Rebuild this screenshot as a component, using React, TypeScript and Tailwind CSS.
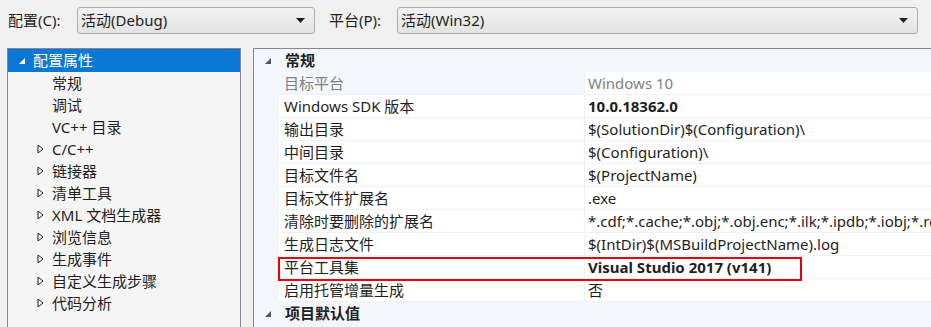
import * as React from 'react';

const FONT = '"Noto Sans", "Noto Sans CJK SC", sans-serif';

type TreeItem = { label: string; depth: 0 | 1; state: 'open' | 'closed' | 'leaf'; selected?: boolean };

const TREE: TreeItem[] = [
  { label: '配置属性', depth: 0, state: 'open', selected: true },
  { label: '常规', depth: 1, state: 'leaf' },
  { label: '调试', depth: 1, state: 'leaf' },
  { label: 'VC++ 目录', depth: 1, state: 'leaf' },
  { label: 'C/C++', depth: 1, state: 'closed' },
  { label: '链接器', depth: 1, state: 'closed' },
  { label: '清单工具', depth: 1, state: 'closed' },
  { label: 'XML 文档生成器', depth: 1, state: 'closed' },
  { label: '浏览信息', depth: 1, state: 'closed' },
  { label: '生成事件', depth: 1, state: 'closed' },
  { label: '自定义生成步骤', depth: 1, state: 'closed' },
  { label: '代码分析', depth: 1, state: 'closed' },
];

type Prop = { name: string; value: string; bold?: boolean; readOnly?: boolean; marked?: boolean };

const PROPS: Prop[] = [
  { name: '目标平台', value: 'Windows 10', readOnly: true },
  { name: 'Windows SDK 版本', value: '10.0.18362.0', bold: true },
  { name: '输出目录', value: '$(SolutionDir)$(Configuration)\\' },
  { name: '中间目录', value: '$(Configuration)\\' },
  { name: '目标文件名', value: '$(ProjectName)' },
  { name: '目标文件扩展名', value: '.exe' },
  { name: '清除时要删除的扩展名', value: '*.cdf;*.cache;*.obj;*.obj.enc;*.ilk;*.ipdb;*.iobj;*.resources;*.tlb;*.tli;*.tlh;*.tmp' },
  { name: '生成日志文件', value: '$(IntDir)$(MSBuildProjectName).log' },
  { name: '平台工具集', value: 'Visual Studio 2017 (v141)', bold: true, marked: true },
  { name: '启用托管增量生成', value: '否' },
];

function OpenArrow({ color }: { color: string }) {
  return (
    <svg width="8" height="8" viewBox="0 0 8 8" className="shrink-0">
      <path d="M7 1 L7 7 L1 7 Z" fill={color} />
    </svg>
  );
}

function ClosedArrow() {
  return (
    <svg width="7" height="10" viewBox="0 0 7 10" className="shrink-0">
      <path d="M1 1 L6 5 L1 9 Z" fill="none" stroke="#1e1e1e" strokeWidth="1" />
    </svg>
  );
}

function Combo({ text, className }: { text: string; className: string }) {
  return (
    <div
      className={`flex h-[27px] shrink-0 items-center justify-between rounded-[3px] border border-[#acacac] bg-gradient-to-b from-[#f2f2f2] to-[#e3e3e3] pl-[3px] pr-[9px] ${className}`}
    >
      <span className="text-[15px] leading-none text-[#1e1e1e]">{text}</span>
      <svg width="9" height="5" viewBox="0 0 9 5">
        <path d="M0 0 L9 0 L4.5 5 Z" fill="#1e1e1e" />
      </svg>
    </div>
  );
}

export default function App() {
  return (
    <div className="h-[327px] w-[931px] overflow-hidden bg-[#f0f0f0] text-[#1e1e1e]" style={{ fontFamily: FONT }}>
      {/* config / platform bar */}
      <div className="flex h-[48px] items-start pt-[7px]">
        <span className="ml-[8px] mt-[4px] w-[69px] shrink-0 text-[15px] leading-[18px]">配置(C):</span>
        <Combo text="活动(Debug)" className="w-[238px]" />
        <span className="ml-[14px] mt-[4px] w-[68px] shrink-0 text-[15px] leading-[18px]">平台(P):</span>
        <Combo text="活动(Win32)" className="w-[521px]" />
      </div>

      <div className="flex h-[279px] items-start">
        {/* tree */}
        <div className="ml-[7px] h-full w-[234px] shrink-0 border border-b-0 border-[#828790] bg-[#f5f5f5]">
          {TREE.map((t) => (
            <div
              key={t.label}
              className={`flex items-center whitespace-nowrap text-[15px] ${t.selected ? 'h-[23px] bg-[#0a78d4] text-white' : 'h-[22px]'}`}
            >
              {t.depth === 0 ? (
                <div className="flex items-center">
                  <span className="ml-[10px] w-[16px]">
                    <OpenArrow color="#ffffff" />
                  </span>
                  <span className="ml-[-1px]">{t.label}</span>
                </div>
              ) : (
                <div className="flex items-center">
                  <span className="ml-[29px] flex w-[15px] items-center">{t.state === 'closed' && <ClosedArrow />}</span>
                  <span>{t.label}</span>
                </div>
              )}
            </div>
          ))}
        </div>

        {/* property grid */}
        <div className="ml-[12px] h-full min-w-0 flex-1 border-l border-t border-[#828790] bg-[#f3f6fb]">
          <div className="flex h-[23px] items-center">
            <span className="ml-[10px] w-[21px]">
              <OpenArrow color="#555555" />
            </span>
            <span className="text-[15px] font-bold">常规</span>
          </div>

          {PROPS.map((p) => (
            <div key={p.name} className="relative flex h-[23px] text-[15px]">
              <div className="w-[25px] shrink-0" />
              <div
                className={`flex w-[306px] shrink-0 items-center whitespace-nowrap border-b border-r border-[#eef1f5] pl-[5px] ${
                  p.readOnly ? 'text-[#808080]' : 'bg-white'
                }`}
              >
                {p.name}
              </div>
              <div
                className={`flex min-w-0 flex-1 items-center overflow-hidden whitespace-nowrap border-b border-[#eef1f5] bg-white pl-[3px] ${
                  p.readOnly ? 'text-[#808080]' : ''
                } ${p.bold ? 'font-bold' : ''}`}
              >
                {p.value}
              </div>
              {p.marked && (
                <div className="pointer-events-none absolute left-[24px] top-[1px] z-10 h-[24px] w-[524px] border-2 border-[#e8000b]" />
              )}
            </div>
          ))}

          <div className="flex h-[23px] items-center">
            <span className="ml-[10px] w-[21px]">
              <OpenArrow color="#555555" />
            </span>
            <span className="text-[15px] font-bold">项目默认值</span>
          </div>
        </div>
      </div>
    </div>
  );
}
